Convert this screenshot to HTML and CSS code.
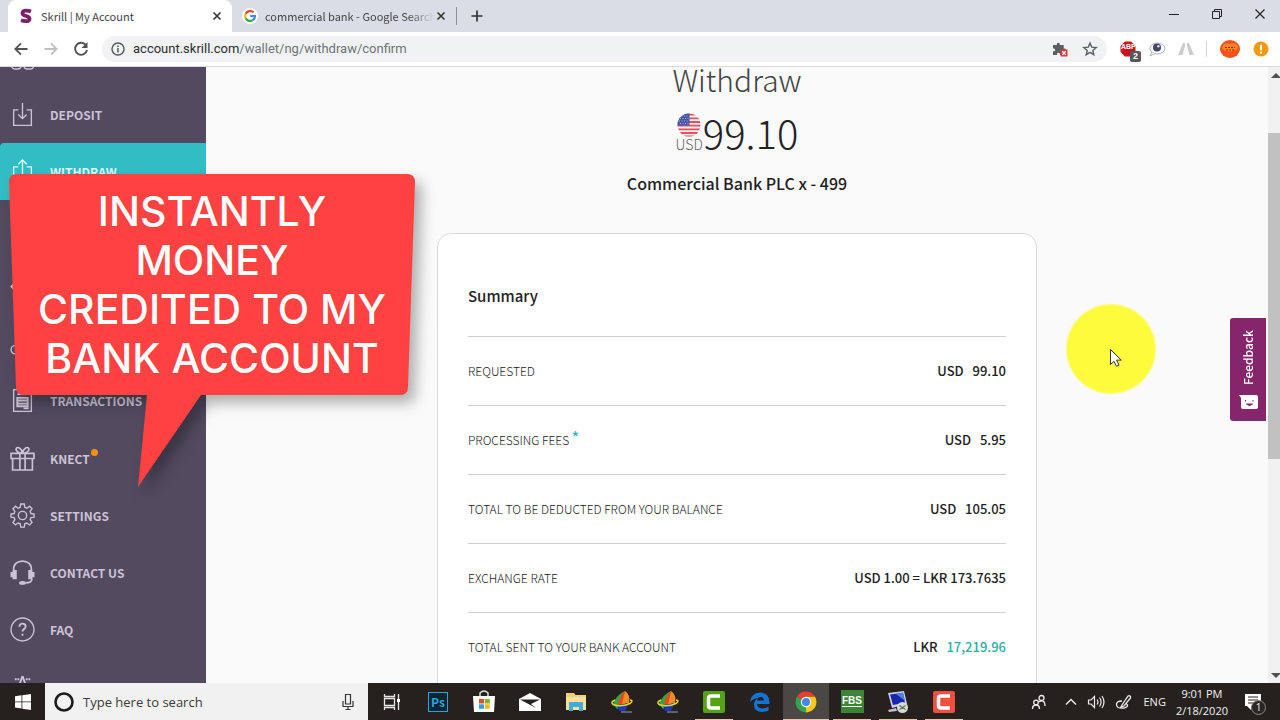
FILE: index.html
```html
<!DOCTYPE html>
<html lang="en">
<head>
<meta charset="utf-8">
<title>Skrill | My Account</title>
<link rel="stylesheet" href="styles.css">
</head>
<body>
<header class="tabstrip">
  <div class="tab tab-active">
    <svg class="favicon" viewBox="0 0 16 16"><path d="M13 3.500C9 2 4.500 2.200 4.500 5.200C4.500 8.800 11.500 7.300 11.500 10.700C11.500 13.800 7 13.600 3 12.300" fill="none" stroke="#811e68" stroke-width="3.800"/></svg>
    <span class="tab-title">Skrill | My Account</span>
    <button class="icon-btn tab-close" aria-label="Close tab"><svg width="16" height="16" viewBox="0 0 16 16"><path d="M4.500 4.500l7 7m0-7l-7 7" stroke="#333" stroke-width="1.600"/></svg></button>
  </div>
  <div class="tab">
    <svg class="favicon" viewBox="0 0 16 16"><circle cx="8" cy="8" r="8" fill="#fff"/><g fill="none" stroke-width="2.200"><path d="M11.500 4.400A5 5 0 0 0 3.600 5.700" stroke="#ea4335"/><path d="M3.600 5.700a5 5 0 0 0 0 4.600" stroke="#fbbc05"/><path d="M3.600 10.300a5 5 0 0 0 7.600 1.500" stroke="#34a853"/><path d="M11.200 11.800A5 5 0 0 0 13 8H8.200" stroke="#4285f4"/></g></svg>
    <span class="tab-title tab-title-fade">commercial bank - Google Search</span>
    <button class="icon-btn tab-close" aria-label="Close tab"><svg width="16" height="16" viewBox="0 0 16 16"><path d="M4.500 4.500l7 7m0-7l-7 7" stroke="#333" stroke-width="1.600"/></svg></button>
  </div>
  <button class="icon-btn new-tab" aria-label="New tab"><svg width="16" height="16" viewBox="0 0 16 16"><path d="M8 2.500v11M2.500 8h11" stroke="#333" stroke-width="1.700"/></svg></button>
  <div class="window-controls">
    <button class="icon-btn" aria-label="Minimize"><svg width="16" height="16" viewBox="0 0 16 16"><path d="M3 8.500h10" stroke="#222"/></svg></button>
    <button class="icon-btn" aria-label="Restore"><svg width="16" height="16" viewBox="0 0 16 16"><path d="M3.500 5.500h7v7h-7zM5.500 5.500v-2h7v7h-2" fill="none" stroke="#222"/></svg></button>
    <button class="icon-btn" aria-label="Close window"><svg width="16" height="16" viewBox="0 0 16 16"><path d="M3.500 3.500l9 9m0-9l-9 9" stroke="#222" stroke-width="1.200"/></svg></button>
  </div>
</header>

<div class="toolbar">
  <button class="icon-btn nav-btn" aria-label="Back"><svg width="18" height="18" viewBox="0 0 18 18"><path d="M15.500 9H3.500M9 3.300L3.300 9L9 14.700" fill="none" stroke="#505357" stroke-width="1.800"/></svg></button>
  <button class="icon-btn nav-btn" aria-label="Forward"><svg width="18" height="18" viewBox="0 0 18 18"><path d="M2.500 9h12M9 3.300L14.700 9L9 14.700" fill="none" stroke="#bdbfc1" stroke-width="1.800"/></svg></button>
  <button class="icon-btn nav-btn" aria-label="Reload"><svg width="18" height="18" viewBox="0 0 18 18"><path d="M14.200 5.600A6 6 0 1 0 15 10" fill="none" stroke="#505357" stroke-width="1.900"/><path d="M15.500 2v6h-6z" fill="#505357"/></svg></button>
  <div class="address">
    <svg width="14" height="14" viewBox="0 0 14 14"><circle cx="7" cy="7" r="6" fill="none" stroke="#55585c" stroke-width="1.400"/><path d="M7 6v4.500M7 3.400v1.500" stroke="#55585c" stroke-width="1.500"/></svg>
    <p class="url">account.skrill.com<span class="url-path">/wallet/ng/withdraw/confirm</span></p>
    <button class="icon-btn" aria-label="Plugin blocked"><svg width="16" height="16" viewBox="0 0 16 16"><path d="M1 4h4c-1-3 3.500-3 2.700 0h4v3.500c3-.8 3 3.500 0 2.700V14H8c.5-3-3.500-3-3 0H1v-3.700c3 .5 3-3.300 0-2.800z" fill="#5b5e62"/><rect x="8.500" y="8.500" width="7" height="7" fill="#e2383a"/><path d="M10.300 10.300l3.400 3.400m0-3.400l-3.400 3.400" stroke="#fff" stroke-width="1.300"/></svg></button>
    <button class="icon-btn star" aria-label="Bookmark"><svg width="16" height="16" viewBox="0 0 16 16"><path d="M8 2l1.700 4.100 4.500.4-3.400 2.900 1 4.300L8 11.400l-3.800 2.300 1-4.300L1.800 6.500l4.500-.4z" fill="none" stroke="#5b5e62" stroke-width="1.400"/></svg></button>
  </div>
  <div class="extensions">
    <button class="icon-btn ext" aria-label="Ad blocker"><svg width="16" height="16" viewBox="0 0 16 16"><path d="M4.900.5h6.200l4.400 4.400v6.200l-4.400 4.400H4.900L.5 11.100V4.900z" fill="#c4161c"/></svg><span class="ext-label">ABP</span><span class="ext-badge">2</span></button>
    <button class="icon-btn" aria-label="Eye extension"><svg width="18" height="16" viewBox="0 0 18 16"><ellipse cx="9.500" cy="7.500" rx="7.500" ry="5.500" fill="#fafafa" stroke="#aeb3bb"/><path d="M4 11l-2 4 5-2.500" fill="#fff" stroke="#aeb3bb"/><circle cx="9" cy="6.500" r="4" fill="#43486a"/><circle cx="10.400" cy="5.300" r="1.200" fill="#dfe3f3"/></svg></button>
    <button class="icon-btn" aria-label="Road extension"><svg width="16" height="16" viewBox="0 0 16 16"><path d="M5 2h2v3L4.500 14H0zM9 2h2l5 12h-4.500L9 5z" fill="#cbcccd"/></svg></button>
    <span class="divider"></span>
    <button class="icon-btn" aria-label="Profile"><svg width="22" height="20" viewBox="0 0 22 20"><ellipse cx="11" cy="10" rx="10" ry="9" fill="#f6511c"/><path d="M3 9c1-5 5-5 8-4 3-1 8-1 8 4-2 4-14 5-16 0z" fill="#ff8420"/><path d="M6 8.500h10M7 11h8" stroke="#9c2b13" stroke-width="1.200" stroke-dasharray="2 1"/></svg></button>
    <button class="icon-btn" aria-label="Update available"><svg width="16" height="16" viewBox="0 0 16 16"><circle cx="8" cy="8" r="7.500" fill="#f29a0b"/><path d="M8 3.800v5.400M8 10.600v1.900" stroke="#fff" stroke-width="1.800"/></svg></button>
  </div>
</div>

<div class="page">
  <nav class="sidebar" aria-label="Account">
    <ul class="menu">
      <li class="menu-item"><svg class="menu-icon" viewBox="0 0 24 24"><rect x="1.500" y="14" width="9" height="9" rx="3"/><rect x="13.500" y="14" width="9" height="9" rx="3"/></svg></li>
      <li><a class="menu-item" href="#deposit"><svg class="menu-icon" viewBox="0 0 24 24"><path d="M8 7.500H3.500v15h17v-15H16M12 1v15M8 12l4 4 4-4"/></svg>DEPOSIT</a></li>
      <li><a class="menu-item menu-item-active" href="#withdraw"><svg class="menu-icon" viewBox="0 0 24 24"><path d="M8 7.500H3.500v15h17v-15H16M12 16V1M8 5l4-4 4 4"/></svg>WITHDRAW</a></li>
    </ul>
    <ul class="menu">
      <li class="menu-item"></li>
      <li class="menu-item"><svg class="menu-icon" viewBox="0 0 24 24"><path d="M4 9L1 12l3 3M2 12h18"/></svg></li>
      <li class="menu-item"><svg class="menu-icon" viewBox="0 0 24 24"><circle cx="5" cy="18" r="4"/></svg></li>
      <li><a class="menu-item" href="#transactions"><svg class="menu-icon" viewBox="0 0 24 24"><path d="M3.500 1.500h17v21h-17zM7 6h7"/><path d="M7 9.500h10v8H7zM7 12h10M7 15h10M13 19.500h5" stroke-width="1.800"/></svg>TRANSACTIONS</a></li>
    </ul>
    <ul class="menu">
      <li><a class="menu-item" href="#knect"><svg class="menu-icon menu-icon-bold" viewBox="0 0 24 24"><path d="M1 7h22v5H1zM2.500 12h19v11h-19zM9.500 7v16M14.500 7v16M12 7C9 7 5 5 6 2.500S11 2 12 7c1-5 5-7 6-4.500S15 7 12 7z"/></svg><span class="menu-label">KNECT<i class="dot"></i></span></a></li>
      <li><a class="menu-item" href="#settings"><svg class="menu-icon" viewBox="0 0 24 24"><circle cx="12" cy="12" r="4"/><path d="M10.300 1h3.400l.5 3.200 2 .8 2.600-1.900 2.400 2.400-1.900 2.600.8 2 3 .5v3l-3 .5-.8 2 1.900 2.600-2.400 2.400-2.600-1.900-2 .8-.5 3.200h-3.400l-.5-3.200-2-.8-2.600 1.900-2.400-2.400 1.900-2.600-.8-2-3-.5v-3l3-.5.8-2-1.900-2.600 2.400-2.400L7.800 5l2-.8z"/></svg>SETTINGS</a></li>
      <li><a class="menu-item" href="#contact"><svg class="menu-icon menu-icon-bold" viewBox="0 0 24 24"><path d="M3.500 10C3 4 7 1 12 1s9 3 8.500 9M21 18c0 3-3 4-6 4"/><path d="M5.500 9.500v9M3.500 9.500v9M1.500 11.500v5M18.500 9.500v9M20.500 9.500v9M22.500 11.500v5" stroke-width="2"/><ellipse cx="12" cy="22" rx="2.500" ry="1" fill="#d6d0df"/></svg>CONTACT US</a></li>
      <li><a class="menu-item" href="#faq"><svg class="menu-icon" viewBox="0 0 24 24"><circle cx="12" cy="12" r="11"/><path d="M9 9.300c0-4 6-3.600 6-.3 0 2.500-3 2.500-3 5M12 16v2" stroke-width="1.800"/></svg>FAQ</a></li>
      <li class="menu-item"><svg class="menu-icon" viewBox="0 0 24 24"><path d="M12 2l-2.500 7M12 2l2.500 7M5.500 4v2M8 4v2M16 4v2M18.500 4v2" stroke-width="1.800"/></svg></li>
    </ul>
  </nav>

  <main class="content">
    <h1 class="title">Withdraw</h1>
    <div class="amount">
      <div class="currency">
        <svg width="24" height="24" viewBox="0 0 24 24"><clipPath id="flag"><circle cx="12" cy="12" r="11.500"/></clipPath><g clip-path="url(#flag)"><path d="M0 0h24v24H0z" fill="#fbeff1"/><path d="M0 1.500h24M0 5.300h24M0 9h24M0 12.700h24M0 16.400h24M0 20h24M0 23.500h24" stroke="#e0525f" stroke-width="1.800"/><path d="M0 0h12.500v12.500H0z" fill="#4356a8"/><path d="M2 3h10M3 5.500h9M2 8h10M3 10.500h9" stroke="#aab4de" stroke-width="1" stroke-dasharray="1 1.500"/></g></svg>
        <span class="currency-code">USD</span>
      </div>
      <span class="amount-value">99.10</span>
    </div>
    <p class="bank">Commercial Bank PLC x - 499</p>

    <section class="card">
      <h2 class="card-title">Summary</h2>
      <table class="summary">
        <tr><th scope="row">REQUESTED</th><td>USD&nbsp;&nbsp; 99.10</td></tr>
        <tr><th scope="row">PROCESSING FEES <sup class="note">*</sup></th><td>USD&nbsp;&nbsp; 5.95</td></tr>
        <tr><th scope="row">TOTAL TO BE DEDUCTED FROM YOUR BALANCE</th><td>USD&nbsp;&nbsp; 105.05</td></tr>
        <tr><th scope="row">EXCHANGE RATE</th><td>USD 1.00 = LKR 173.7635</td></tr>
        <tr><th scope="row">TOTAL SENT TO YOUR BANK ACCOUNT</th><td>LKR&nbsp;&nbsp; <span class="received">17,219.96</span></td></tr>
      </table>
    </section>

    <div class="pointer">
      <svg width="92" height="92" viewBox="0 0 92 92"><defs><radialGradient id="halo"><stop offset=".94" stop-color="#fdfb3b"/><stop offset="1" stop-color="#fdfb3b" stop-opacity="0"/></radialGradient></defs><circle cx="46" cy="46" r="46" fill="url(#halo)"/><path d="M45.500 46.500v15l3.500-3.200 2.500 5 2.500-1.200-2.400-5h4.700z" fill="#fff" stroke="#333"/></svg>
    </div>
    <button class="feedback">
      <span class="feedback-text">Feedback</span>
      <svg width="19" height="15" viewBox="0 0 19 15"><path d="M0 0h17q2 0 2 2v10q0 2-2 2H4q-2 0-2-2V3z" fill="#fff"/><path d="M6.500 5v1.500M14 5v1.500M7.500 9q3 3 6 0z" fill="#85266d" stroke="#85266d"/></svg>
    </button>
  </main>

  <div class="scrollbar">
    <svg width="12" height="16" viewBox="0 0 12 16"><path d="M3 11l5-5 5 5z" fill="#505050"/></svg>
    <div class="scroll-track"><div class="scroll-thumb"></div></div>
    <svg width="12" height="16" viewBox="0 0 12 16"><path d="M3 6l5 5 5-5z" fill="#505050"/></svg>
  </div>
</div>

<aside class="callout">
  <svg class="callout-shape" width="450" height="350" viewBox="0 0 450 350"><path d="M17 0H407Q415 0 415 8L408 213Q408 221 400 221H201L138 313L147 221H24Q16 221 16 213L9 8Q9 0 17 0z" fill="#fd4241"/></svg>
  <p class="callout-text">INSTANTLY<br>MONEY<br>CREDITED TO MY<br>BANK ACCOUNT</p>
</aside>

<footer class="taskbar">
  <button class="start" aria-label="Start"><svg width="16" height="16" viewBox="0 0 16 16"><path d="M0 2.300L6.500 1.300V7.500H0zM7.300 1.200L16 0v7.500H7.300zM0 8.300h6.500v6.200L0 13.600zM7.300 8.300H16V16l-8.700-1.300z" fill="#fff"/></svg></button>
  <label class="search">
    <svg width="22" height="22" viewBox="0 0 22 22"><circle cx="11" cy="11" r="8.500" fill="none" stroke="#1b1b1b" stroke-width="2.600"/></svg>
    <input class="search-input" type="text" placeholder="Type here to search" aria-label="Type here to search">
    <svg width="14" height="18" viewBox="0 0 14 18"><path d="M4.500 1.500h5v9.500h-5zM2 8v5.500h10V8M7 13.500V16M4.500 16.500h5" fill="none" stroke="#333" stroke-width="1.200"/></svg>
  </label>
  <div class="apps">
    <button class="app" aria-label="Task view"><svg width="22" height="20" viewBox="0 0 22 20"><path d="M3.500 2v2.500h10V2M3.500 18v-2.500h10V18M3.500 6.500h10v7h-10zM17.500 2v16" fill="none" stroke="#e8e6e5" stroke-width="1.300"/><path d="M16 7h3v3h-3z" fill="#fff"/></svg></button>
    <button class="app" aria-label="Photoshop"><span class="ps">Ps</span></button>
    <button class="app" aria-label="Store"><svg width="24" height="24" viewBox="0 0 24 24"><path d="M8 6V3q4-4 8 0v3" fill="none" stroke="#ddd" stroke-width="1.500"/><path d="M1 6h22l-1 16H2z" fill="#fff"/><path d="M7 9h5v4.500H7z" fill="#e5502c"/><path d="M12.800 9h5v4.500h-5z" fill="#7bb52a"/><path d="M7 14.300h5v4.500H7z" fill="#2ea3e3"/><path d="M12.800 14.300h5v4.500h-5z" fill="#f8b81b"/></svg></button>
    <button class="app" aria-label="Mail"><svg width="24" height="22" viewBox="0 0 24 22"><path d="M1 8L12 2l11 6v12H1z" fill="#fff"/><path d="M2 8.500h20L13 13l5 4z" fill="#26211f"/></svg></button>
    <button class="app" aria-label="File explorer"><svg width="22" height="22" viewBox="0 0 22 22"><path d="M1 2h8l1.500 2H21v15H1z" fill="#f4cf78"/><path d="M1 6h20v13H1z" fill="#fbe09a"/><path d="M4 20v-9h14v9h-4v-4H8v4z" fill="#47a9dd"/></svg></button>
    <button class="app" aria-label="Graphics tool"><svg width="24" height="24" viewBox="0 0 24 24"><path d="M15 1Q6 5 3 14l4 5 6-4z" fill="#2fa54a"/><path d="M15 1q6 4 4 12l-8 2z" fill="#f68b1f"/><path d="M15 1Q9 6 8 14l4 1z" fill="#e34a22"/><path d="M7 15l12-2-4 8H9z" fill="#2038b8"/><path d="M5 10Q0 12 3 14.500q8 3 17-1 4-3.500 0-3.500" fill="none" stroke="#e9d928" stroke-width="1.500"/><path d="M11 22h11" stroke="#74747e" stroke-width="1.500"/></svg></button>
    <button class="app" aria-label="Graphics tool"><svg width="24" height="24" viewBox="0 0 24 24"><path d="M15 1Q6 5 3 14l4 5 6-4z" fill="#2fa54a"/><path d="M15 1q6 4 4 12l-8 2z" fill="#f68b1f"/><path d="M15 1Q9 6 8 14l4 1z" fill="#e34a22"/><path d="M7 15l12-2-4 8H9z" fill="#2038b8"/><path d="M5 10Q0 12 3 14.500q8 3 17-1 4-3.500 0-3.500" fill="none" stroke="#e9d928" stroke-width="1.500"/><path d="M11 22h11" stroke="#74747e" stroke-width="1.500"/></svg></button>
    <button class="app app-open" aria-label="Camtasia"><svg width="24" height="24" viewBox="0 0 24 24"><rect x="1" y="1" width="22" height="22" rx="2" fill="#54a313"/><path d="M18 6H9Q6.500 6 6.500 8.500v7Q6.500 18 9 18h9" fill="none" stroke="#fff" stroke-width="3.500"/></svg></button>
    <button class="app" aria-label="Edge"><svg width="22" height="22" viewBox="0 0 22 22"><path d="M1 11Q2 2 11 1.500q9 0 9.500 9.500v2H8q0 4 5 4.500 3.500 0 6.500-1.700v4Q16 21 12.500 21 5 20.500 5 13.500 5 9.500 9 7 4 7.500 1 11zM8 9.500h7Q15 6 11.500 6 8.500 6.300 8 9.500z" fill="#1273d0" fill-rule="evenodd"/></svg></button>
    <button class="app app-open app-current" aria-label="Chrome"><svg width="22" height="22" viewBox="0 0 22 22"><path d="M11 11L1.900 5.800A10.500 10.500 0 0 1 20.100 5.800H11z" fill="#e3412f"/><path d="M11 11L1.900 5.800A10.500 10.500 0 0 0 11 21.500L15.500 13.600z" fill="#33a350"/><path d="M11 11V5.800h9.100A10.500 10.500 0 0 1 11 21.500z" fill="#fbc817"/><circle cx="11" cy="11" r="5.200" fill="#f5f5f5"/><circle cx="11" cy="11" r="4" fill="#4486ee"/></svg></button>
    <button class="app app-open" aria-label="FBS"><span class="fbs"><span class="fbs-text">FBS</span></span></button>
    <button class="app app-open" aria-label="Remote desktop"><svg width="24" height="24" viewBox="0 0 24 24"><path d="M2 3l16-2 3 13-15 4z" fill="#ccd2df"/><path d="M4 4.500l13-1.700 2 10L7 15z" fill="#1926ae"/><path d="M10 4l7-1.200 2 8z" fill="#577ee0"/><path d="M2 20l8-2 1 3-8 1z" fill="#bcc3cf"/><circle cx="16.500" cy="17.500" r="5.500" fill="#d6dbd1"/><path d="M13.500 15.500l3 2-3 2M19.500 15.500l-3 2 3 2" fill="none" stroke="#637950" stroke-width="1.200"/></svg></button>
    <button class="app app-open" aria-label="Camtasia recorder"><svg width="24" height="24" viewBox="0 0 24 24"><rect x="1" y="1" width="22" height="22" rx="2" fill="#f2503f"/><path d="M18 6H9Q6.500 6 6.500 8.500v7Q6.500 18 9 18h9" fill="none" stroke="#fff" stroke-width="3.500"/></svg></button>
  </div>
  <div class="tray">
    <svg width="16" height="16" viewBox="0 0 16 16" fill="none" stroke="#eee" stroke-width="1.300"><circle cx="10.500" cy="4" r="2.500"/><circle cx="5" cy="8.500" r="2.300"/><path d="M1.500 15q0-4 3.500-4t3.500 4M7.500 8q6.500-3.500 6.500 4"/></svg>
    <svg class="caret" width="12" height="12" viewBox="0 0 12 12" fill="none" stroke="#eee" stroke-width="1.400"><path d="M1 8.500l5-5 5 5"/></svg>
    <svg width="18" height="16" viewBox="0 0 18 16" fill="none" stroke="#eee" stroke-width="1.200"><path d="M1.500 6h2.500l3.500-3.500v11L4 10H1.500zM10 5.500q2 2.500 0 5M12.500 3.500q3.200 4.500 0 9M15 2q4 6 0 12"/></svg>
    <svg width="18" height="16" viewBox="0 0 18 16" fill="none" stroke="#eee" stroke-width="1.300"><path d="M7 11l6-9q3-1 2.500 2L9 12l-3 1zM7 7Q1 7 1.500 11t8 3q5-2 2-4"/></svg>
    <span class="lang">ENG</span>
    <time class="clock" datetime="2020-02-18T21:01">9:01 PM<br>2/18/2020</time>
    <button class="notify" aria-label="Notifications"><svg width="18" height="18" viewBox="0 0 18 18"><path d="M1 1h16v12H7v4l-4-4H1z" fill="#fff"/><path d="M4 4h10M4 7h10M4 10h6" stroke="#26211f" stroke-width="1.200"/></svg><span class="notify-badge">1</span></button>
  </div>
</footer>
</body>
</html>
```

FILE: styles.css
```css
* { box-sizing: border-box; }

body {
  margin: 0;
  height: 100vh;
  display: flex;
  flex-direction: column;
  overflow: hidden;
  font-family: "Open Sans", "Noto Sans", sans-serif;
  background: #fafafa;
}

svg { display: block; flex: none; }
button { font: inherit; color: inherit; border: 0; padding: 0; background: none; }
ul { list-style: none; margin: 0; padding: 0; }

.icon-btn { display: flex; align-items: center; justify-content: center; flex: none; }

/* Browser tabs */
.tabstrip { display: flex; height: 32px; flex: none; padding-left: 8px; background: #dadde6; }
.tab { display: flex; align-items: center; gap: 7px; width: 224px; padding: 0 7px 0 10px; font: 11px/16px "Noto Sans CJK SC", "Noto Sans", sans-serif; color: #444; }
.tab-active { background: #fff; border-radius: 8px 8px 0 0; }
.favicon { width: 16px; height: 16px; }
.tab-title { flex: 1; overflow: hidden; white-space: nowrap; }
.tab-title-fade { mask-image: linear-gradient(to right, #000 85%, transparent); }
.tab-close { margin-left: -8px; }
.new-tab { height: 18px; margin-top: 7px; padding-left: 12px; border-left: 1px solid #8c8f96; }
.window-controls { display: flex; gap: 27px; margin-left: auto; padding-right: 12px; height: 28px; }

/* Address bar */
.toolbar { display: flex; align-items: center; height: 35px; flex: none; padding: 0 11px 0 12px; background: #fff; border-bottom: 1px solid #dcdcdc; }
.nav-btn { width: 30px; padding-right: 12px; }
.address { display: flex; flex: 1; align-items: center; height: 26px; padding: 0 9px; border-radius: 13px; background: #f0f2f4; }
.url { flex: 1; margin: 0 0 0 8px; font: 13px/20px Roboto, sans-serif; color: #2c2e31; }
.url-path { color: #707478; }
.star { margin-left: 14px; }
.extensions { display: flex; align-items: center; gap: 12px; padding-left: 13px; }
.ext { position: relative; }
.ext-label { position: absolute; left: 1px; top: 2px; font: bold 7px/8px "Liberation Sans", sans-serif; color: #fff; }
.ext-badge { position: absolute; left: 10px; top: 10px; width: 11px; height: 11px; border-radius: 2px; background: #56585b; color: #fff; font: bold 9px/11px "Liberation Sans", sans-serif; text-align: center; }
.divider { width: 1px; height: 16px; background: #d4d4d4; }

/* Page */
.page { display: flex; flex: 1; min-height: 0; font-family: "Noto Sans CJK SC", "Noto Sans", sans-serif; }
.sidebar { display: flex; flex-direction: column; gap: 1px; width: 206px; flex: none; overflow: hidden; background: #534a60; }
.sidebar .menu:first-child { margin-top: -38px; }
.menu-item { display: flex; align-items: center; gap: 15px; height: 57px; padding-left: 10px; font-size: 12px; font-weight: 700; line-height: 16px; color: #cbc3d6; text-decoration: none; }
.menu-item-active { background: #32bdc4; color: #e2f6f7; border-radius: 4px 0 0 0; }
.menu-icon { width: 25px; height: 25px; fill: none; stroke: currentColor; stroke-width: 1.3; }
.menu-icon-bold { stroke-width: 1.6; }
.menu-label { position: relative; }
.dot { position: absolute; left: 41px; top: -2px; width: 7px; height: 7px; border-radius: 50%; background: #f7900f; }

.content { position: relative; flex: 1; display: flex; flex-direction: column; align-items: center; color: #222; }
.title { flex: none; margin: 0; font-size: 30px; font-weight: 300; line-height: 24px; color: #444; }
.amount { display: flex; flex: none; align-items: center; height: 62px; margin-top: 10px; }
.currency { display: flex; flex-direction: column; align-items: center; }
.currency-code { font-size: 14px; font-weight: 300; line-height: 14px; color: #666; }
.amount-value { font-size: 40px; font-weight: 300; line-height: 60px; }
.bank { flex: none; margin: 8px 0 0; font-size: 16px; font-weight: 500; line-height: 24px; }
.card { width: 600px; max-width: 100%; flex: none; margin-top: 38px; padding: 0 30px 40px; border: 1px solid #dadada; border-radius: 14px; background: #fff; }
.card-title { margin: 0; padding: 50px 0 28px; font-size: 15px; font-weight: 500; line-height: 24px; }
.summary { width: 100%; border-collapse: collapse; font-size: 13px; line-height: 20px; }
.summary tr { height: 69px; border-top: 1px solid #d0d0d0; }
.summary th { padding: 0; text-align: left; font-size: 12px; font-weight: 300; color: #222; }
.summary td { padding: 0; text-align: right; font-weight: 500; }
.note { font-size: 15px; font-weight: 500; color: #2db5bd; line-height: 0; vertical-align: 2px; }
.received { color: #2bb0a6; }

.pointer { position: absolute; left: 859px; top: 236px; }
.feedback { position: absolute; right: 2px; top: 251px; width: 36px; height: 103px; display: flex; flex-direction: column; align-items: center; justify-content: space-between; padding: 12px 0 11px; border-radius: 3px 0 0 3px; background: #85266d; color: #fff; }
.feedback-text { writing-mode: vertical-rl; transform: rotate(180deg); font-size: 12px; font-weight: 500; line-height: 16px; }

.scrollbar { display: flex; flex-direction: column; width: 12px; flex: none; background: #f1f1f1; }
.scroll-track { flex: 1; padding-top: 50px; }
.scroll-thumb { height: 61%; background: #c1c1c1; }

/* Speech bubble */
.callout { position: absolute; left: 0; top: 174px; width: 424px; }
.callout-shape { filter: drop-shadow(7px 8px 7px rgba(0, 0, 0, .3)); }
.callout-text { position: absolute; left: 0; right: 0; top: 13px; margin: 0; font: 500 41px/49px Inter, sans-serif; color: #fff; text-align: center; white-space: nowrap; }

/* Taskbar */
.taskbar { position: relative; z-index: 1; display: flex; height: 37px; flex: none; background: #26211f; color: #f2f2f2; }
.start { display: flex; align-items: center; justify-content: center; width: 45px; flex: none; }
.search { display: flex; align-items: center; gap: 8px; width: 323px; padding: 0 13px 0 8px; background: #f1f1f1; }
.search-input { flex: 1; min-width: 0; border: 0; padding: 0; background: none; font: 13px/20px "Open Sans", sans-serif; }
.search-input::placeholder { color: #3c3c3c; opacity: 1; }
.apps { display: flex; padding-left: 1px; }
.app { display: flex; align-items: center; justify-content: center; width: 46px; }
.app-open { background: linear-gradient(#e8c3a8, #e8c3a8) center bottom / 38px 1px no-repeat; }
.app-current { background: linear-gradient(#e8c3a8, #e8c3a8) center bottom / 46px 1px no-repeat #4b4745; }
.ps { width: 20px; height: 20px; border: 1px solid #26a5d8; background: #0b2533; color: #26a5d8; font: 600 12px/18px "Noto Sans CJK SC", sans-serif; }
.fbs { width: 23px; height: 23px; padding-top: 5px; background: #3d8436; color: #fff; font: bold 10px/11px "Liberation Sans", sans-serif; }
.fbs-text { border-bottom: 1px solid #fff; }
.tray { display: flex; align-items: center; gap: 10px; margin-left: auto; padding-right: 14px; font-size: 11px; }
.caret { margin-left: 8px; }
.clock { line-height: 17px; text-align: center; }
.notify { position: relative; margin-left: 6px; padding-right: 4px; }
.notify-badge { position: absolute; left: 7px; top: 7px; width: 15px; height: 15px; border: 1px solid #8d8988; border-radius: 50%; background: #2c2725; font-size: 10px; line-height: 13px; text-align: center; }
```
